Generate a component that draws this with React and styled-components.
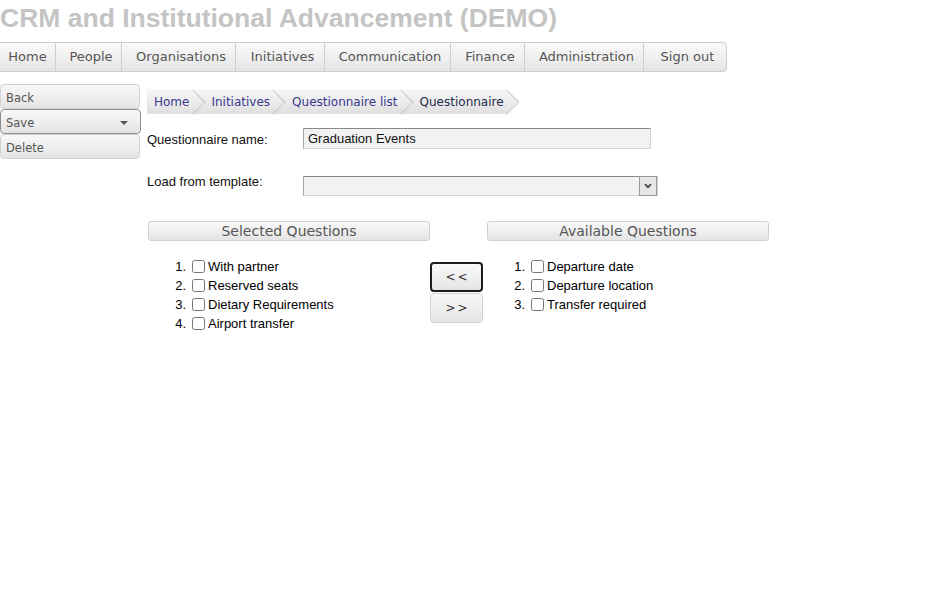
import React from "react";
import styled, { createGlobalStyle } from "styled-components";

const GlobalStyle = createGlobalStyle`
  html, body { margin: 0; padding: 0; background: #fff; }
  body { font-family: "Liberation Sans", Arial, sans-serif; overflow: hidden; }
  *, *::before, *::after { box-sizing: border-box; }
`;

const Page = styled.div`
  width: 929px;
  min-height: 597px;
`;

const Title = styled.h1`
  margin: 0;
  height: 42px;
  font: bold 26.5px/36px "Liberation Sans", Arial, sans-serif;
  color: #c4c4c4;
  white-space: nowrap;
`;

const Nav = styled.nav`
  display: flex;
  width: max-content;
  margin-left: -6px;
  height: 30px;
  border: 1px solid #cfcfcf;
  border-radius: 0 4px 4px 0;
  background: linear-gradient(#f9f9f9, #efefef 55%, #e5e5e5);
  overflow: hidden;
`;

const NavItem = styled.a`
  display: flex;
  align-items: center;
  justify-content: center;
  width: ${(p) => p.$w}px;
  padding: 0 0 1px 5px;
  border-right: 1px solid #cfcfcf;
  font: 13px "DejaVu Sans", Verdana, sans-serif;
  color: #555;
  text-decoration: none;
  white-space: nowrap;
  &:last-child { border-right: none; }
`;

const Body = styled.div`
  display: flex;
  margin-top: 12px;
`;

const Sidebar = styled.div`
  display: flex;
  flex-direction: column;
  width: 147px;
  flex: none;
`;

const SideButton = styled.div`
  display: flex;
  align-items: center;
  justify-content: space-between;
  width: ${(p) => (p.$active ? 141 : 140)}px;
  height: 25px;
  padding: 3px 12px 0 5px;
  border: 1px solid ${(p) => (p.$active ? "#8e8e8e" : "#d2d2d2")};
  border-radius: 4px;
  background: linear-gradient(#f8f8f8, #eeeeee 55%, #e4e4e4);
  font: 11.5px "DejaVu Sans", Verdana, sans-serif;
  color: #555;
`;

const Caret = styled.span`
  width: 0;
  height: 0;
  border-left: 4px solid transparent;
  border-right: 4px solid transparent;
  border-top: 4px solid #555;
`;

const Main = styled.div`
  display: flex;
  flex-direction: column;
  padding-top: 5px;
`;

const Crumbs = styled.div`
  display: flex;
  height: 25px;
  width: max-content;
`;

const Crumb = styled.a`
  position: relative;
  display: flex;
  align-items: center;
  padding: 0 3px 0 ${(p) => (p.$first ? 7 : 19)}px;
  background: linear-gradient(#f6f6f6, #ebebeb 55%, #dedede);
  font: 12px "DejaVu Sans", Verdana, sans-serif;
  color: ${(p) => (p.$current ? "#1d2b4a" : "#38388e")};
  text-decoration: none;
  white-space: nowrap;
  &::after {
    content: "";
    position: absolute;
    top: 50%;
    right: -8.75px;
    width: 17.5px;
    height: 17.5px;
    margin-top: -8.75px;
    transform: rotate(45deg);
    background: linear-gradient(135deg, #f6f6f6, #ebebeb 55%, #dedede);
    border-top: 1px solid #c6c6c6;
    border-right: 1px solid #c6c6c6;
    z-index: 1;
  }
`;

const CrumbText = styled.span`
  position: relative;
  z-index: 2;
`;

const FormRow = styled.div`
  display: flex;
  align-items: flex-start;
  margin-top: ${(p) => p.$mt}px;
`;

const Label = styled.label`
  width: 156px;
  padding-top: ${(p) => p.$pt}px;
  font: 13px/15px "Liberation Sans", Arial, sans-serif;
  color: #111;
`;

const TextInput = styled.input`
  width: 348px;
  height: 21px;
  padding: 0 4px;
  border: 1px solid #d4d4d4;
  border-top-color: #8a8a8a;
  border-left-color: #a8a8a8;
  background: #f2f2f2;
  font: 13px "Liberation Sans", Arial, sans-serif;
  color: #111;
  outline: none;
`;

const SelectBox = styled.div`
  display: flex;
  width: 355px;
  height: 20px;
  margin-top: ${(p) => p.$mt}px;
  border: 1px solid #d4d4d4;
  border-top-color: #8a8a8a;
  border-left-color: #a8a8a8;
  background: #f2f2f2;
`;

const SelectField = styled.div`
  flex: 1;
`;

const SelectArrow = styled.div`
  display: flex;
  align-items: center;
  justify-content: center;
  width: 18px;
  height: 20px;
  margin-top: -1px;
  border: 1px solid #9a9a9a;
  background: #e6e6e6;
`;

const Transfer = styled.div`
  display: grid;
  grid-template-columns: 282px 57px 282px;
  margin: 25px 0 0 1px;
`;

const ColumnHead = styled.div`
  height: 20px;
  border: 1px solid #d0d0d0;
  border-radius: 3px;
  background: linear-gradient(#f8f8f8, #eeeeee 55%, #e4e4e4);
  font: 14px/18px "DejaVu Sans", Verdana, sans-serif;
  color: #555;
  text-align: center;
`;

const List = styled.ol`
  margin: 16px 0 0;
  padding: 0;
  list-style: none;
`;

const Row = styled.li`
  display: flex;
  align-items: center;
  height: 19px;
  font: 13px "Liberation Sans", Arial, sans-serif;
  color: #000;
`;

const Num = styled.span`
  width: 38px;
  text-align: right;
`;

const Check = styled.input`
  width: 13px;
  height: 13px;
  margin: 0 3px 0 6px;
`;

const Moves = styled.div`
  display: flex;
  flex-direction: column;
  gap: 1px;
  padding-top: 21px;
`;

const MoveButton = styled.button`
  width: 53px;
  height: 30px;
  padding: 0;
  border: ${(p) => (p.$focused ? "2px solid #1c1c1c" : "1px solid #d2d2d2")};
  border-radius: 4px;
  background: linear-gradient(#f8f8f8, #eeeeee 55%, #e4e4e4);
  font: 12px "DejaVu Sans", Verdana, sans-serif;
  letter-spacing: 2px;
  text-indent: 2px;
  color: #333;
`;

const navItems = [
  ["Home", 61],
  ["People", 66],
  ["Organisations", 114],
  ["Initiatives", 89],
  ["Communication", 126],
  ["Finance", 74],
  ["Administration", 119],
  ["Sign out", 82],
];

const crumbs = ["Home", "Initiatives", "Questionnaire list", "Questionnaire"];
const selected = ["With partner", "Reserved seats", "Dietary Requirements", "Airport transfer"];
const available = ["Departure date", "Departure location", "Transfer required"];

function QuestionList({ items }) {
  return (
    <List>
      {items.map((q, i) => (
        <Row key={q}>
          <Num>{i + 1}.</Num>
          <Check type="checkbox" />
          <span>{q}</span>
        </Row>
      ))}
    </List>
  );
}

export default function App() {
  return (
    <Page>
      <GlobalStyle />
      <Title>CRM and Institutional Advancement (DEMO)</Title>
      <Nav>
        {navItems.map(([t, w]) => (
          <NavItem key={t} $w={w}>{t}</NavItem>
        ))}
      </Nav>
      <Body>
        <Sidebar>
          <SideButton>Back</SideButton>
          <SideButton $active>
            Save <Caret />
          </SideButton>
          <SideButton>Delete</SideButton>
        </Sidebar>
        <Main>
          <Crumbs>
            {crumbs.map((c, i) => (
              <Crumb key={c} $first={i === 0} $current={i === crumbs.length - 1}>
                <CrumbText>{c}</CrumbText>
              </Crumb>
            ))}
          </Crumbs>
          <FormRow $mt={14}>
            <Label $pt={4}>Questionnaire name:</Label>
            <TextInput defaultValue="Graduation Events" />
          </FormRow>
          <FormRow $mt={25}>
            <Label $pt={0}>Load from template:</Label>
            <SelectBox $mt={2}>
              <SelectField />
              <SelectArrow>
                <svg width="8" height="6" viewBox="0 0 8 6">
                  <path d="M1 1.2 L4 4.2 L7 1.2" fill="none" stroke="#4a4a4a" strokeWidth="1.8" />
                </svg>
              </SelectArrow>
            </SelectBox>
          </FormRow>
          <Transfer>
            <ColumnHead>Selected Questions</ColumnHead>
            <div />
            <ColumnHead>Available Questions</ColumnHead>
            <QuestionList items={selected} />
            <Moves>
              <MoveButton $focused>&lt;&lt;</MoveButton>
              <MoveButton>&gt;&gt;</MoveButton>
            </Moves>
            <QuestionList items={available} />
          </Transfer>
        </Main>
      </Body>
    </Page>
  );
}
